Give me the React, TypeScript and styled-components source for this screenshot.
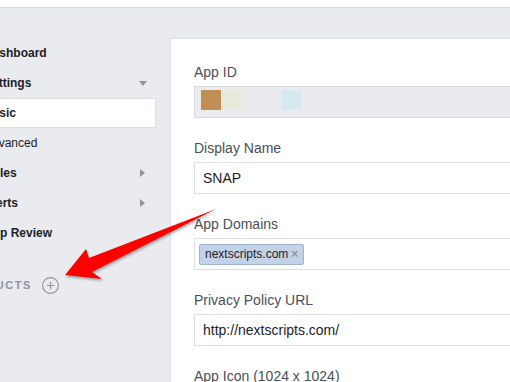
import styled, { createGlobalStyle } from "styled-components"
import { CirclePlus } from "lucide-react"

const GlobalStyle = createGlobalStyle`
body {
  margin: 0;
  background: #e9ebee;
  font-family: "Liberation Sans", Arial, sans-serif;
  overflow: hidden;
}
`

const TopBar = styled.header`
height: 7px;
background: #fff;
border-bottom: 1px solid #d4d6da;
`

const Layout = styled.div`
display: flex;
align-items: flex-start;
margin-left: -40px;
width: 820px;
`

const Sidebar = styled.nav`
width: 210px;
flex-shrink: 0;
padding-top: 30px;
`

const NavItem = styled.div<{ $bold?: boolean; $selected?: boolean }>`
height: 30px;
box-sizing: border-box;
display: flex;
align-items: center;
justify-content: space-between;
margin-right: 14px;
padding: 0 8px 0 24px;
font-size: 12px;
font-weight: ${(p) => (p.$bold ? 700 : 400)};
color: #1d2129;
background: ${(p) => (p.$selected ? "#fff" : "transparent")};
border: 1px solid ${(p) => (p.$selected ? "#dddfe2" : "transparent")};
border-left: none;
`

const Caret = styled.span<{ $dir: "down" | "right" }>`
width: 9px;
height: 9px;
display: flex;
align-items: center;
justify-content: center;
&::after {
  content: "";
  display: block;
  ${(p) =>
    p.$dir === "down"
      ? `border-left: 4.5px solid transparent; border-right: 4.5px solid transparent; border-top: 5px solid #90949c;`
      : `border-top: 4.5px solid transparent; border-bottom: 4.5px solid transparent; border-left: 5px solid #90949c;`}
}
`

const SectionHeader = styled.div`
margin-top: 22px;
margin-left: -2px;
height: 30px;
display: flex;
align-items: center;
gap: 9px;
font-size: 11px;
font-weight: 700;
letter-spacing: 1.5px;
color: #90949c;
`

const Panel = styled.main`
flex: 1;
margin-top: 30px;
min-height: 420px;
background: #fff;
border: 1px solid #dddfe2;
padding: 24px 0 0 23px;
`

const Group = styled.div`
margin-bottom: 21px;
`

const Label = styled.div`
font-size: 14px;
line-height: 18px;
color: #4b4f56;
margin-bottom: 5px;
`

const Field = styled.div`
height: 32px;
box-sizing: border-box;
width: 100%;
display: flex;
align-items: center;
padding: 0 8px;
border: 1px solid #dddfe2;
font-size: 14px;
color: #1d2129;
background: #fff;
`

const IdField = styled(Field)`
align-items: flex-start;
padding: 3px 6px;
background: #e9ebee;
border-color: #d8dade;
`

const TagField = styled(Field)`
padding: 0 4px;
`

const Pixel = styled.span<{ $color: string }>`
width: 20px;
height: 20px;
background: ${(p) => p.$color};
`

const Token = styled.span`
height: 21px;
box-sizing: border-box;
display: inline-flex;
align-items: center;
gap: 3px;
padding: 0 5px;
border: 1px solid #9fb3d5;
border-radius: 2px;
background: #c4d2e8;
font-size: 12px;
color: #1d2129;
`

const TokenClose = styled.span`
color: #8a97ad;
font-weight: 700;
font-size: 12px;
`

const Arrow = styled.svg`
position: fixed;
top: 0;
left: 0;
pointer-events: none;
`

const navItems = [
  { label: "Dashboard", bold: true },
  { label: "Settings", bold: true, caret: "down" as const },
  { label: "Basic", bold: true, selected: true },
  { label: "Advanced" },
  { label: "Roles", bold: true, caret: "right" as const },
  { label: "Alerts", bold: true, caret: "right" as const },
  { label: "App Review", bold: true },
]

const idPixels = ["#c18f56", "#e8eadc", "#e9ebee", "#e9ebee", "#d5eaee"]

const arrowPoints = "65,275 86,249 89,258 216,209 92,272 102,279"

export default function App() {
  return (
    <>
      <GlobalStyle />
      <TopBar />
      <Layout>
        <Sidebar>
          {navItems.map((item) => (
            <NavItem key={item.label} $bold={item.bold} $selected={item.selected}>
              <span>{item.label}</span>
              {item.caret && <Caret $dir={item.caret} />}
            </NavItem>
          ))}
          <SectionHeader>
            PRODUCTS
            <CirclePlus size={19} strokeWidth={1.4} color="#90949c" />
          </SectionHeader>
        </Sidebar>
        <Panel>
          <Group>
            <Label>App ID</Label>
            <IdField>
              {idPixels.map((c, i) => (
                <Pixel key={i} $color={c} />
              ))}
            </IdField>
          </Group>
          <Group>
            <Label>Display Name</Label>
            <Field>SNAP</Field>
          </Group>
          <Group>
            <Label>App Domains</Label>
            <TagField>
              <Token>
                nextscripts.com
                <TokenClose>×</TokenClose>
              </Token>
            </TagField>
          </Group>
          <Group>
            <Label>Privacy Policy URL</Label>
            <Field>http://nextscripts.com/</Field>
          </Group>
          <Group>
            <Label>App Icon (1024 x 1024)</Label>
          </Group>
        </Panel>
      </Layout>
      <Arrow width="510" height="382" viewBox="0 0 510 382">
        <defs>
          <filter id="arrowShadow" x="-10%" y="-10%" width="120%" height="130%">
            <feGaussianBlur stdDeviation="1" />
          </filter>
        </defs>
        <polygon points={arrowPoints} fill="rgba(0,0,0,0.3)" transform="translate(1,2)" filter="url(#arrowShadow)" />
        <polygon points={arrowPoints} fill="#ff0000" />
      </Arrow>
    </>
  )
}
